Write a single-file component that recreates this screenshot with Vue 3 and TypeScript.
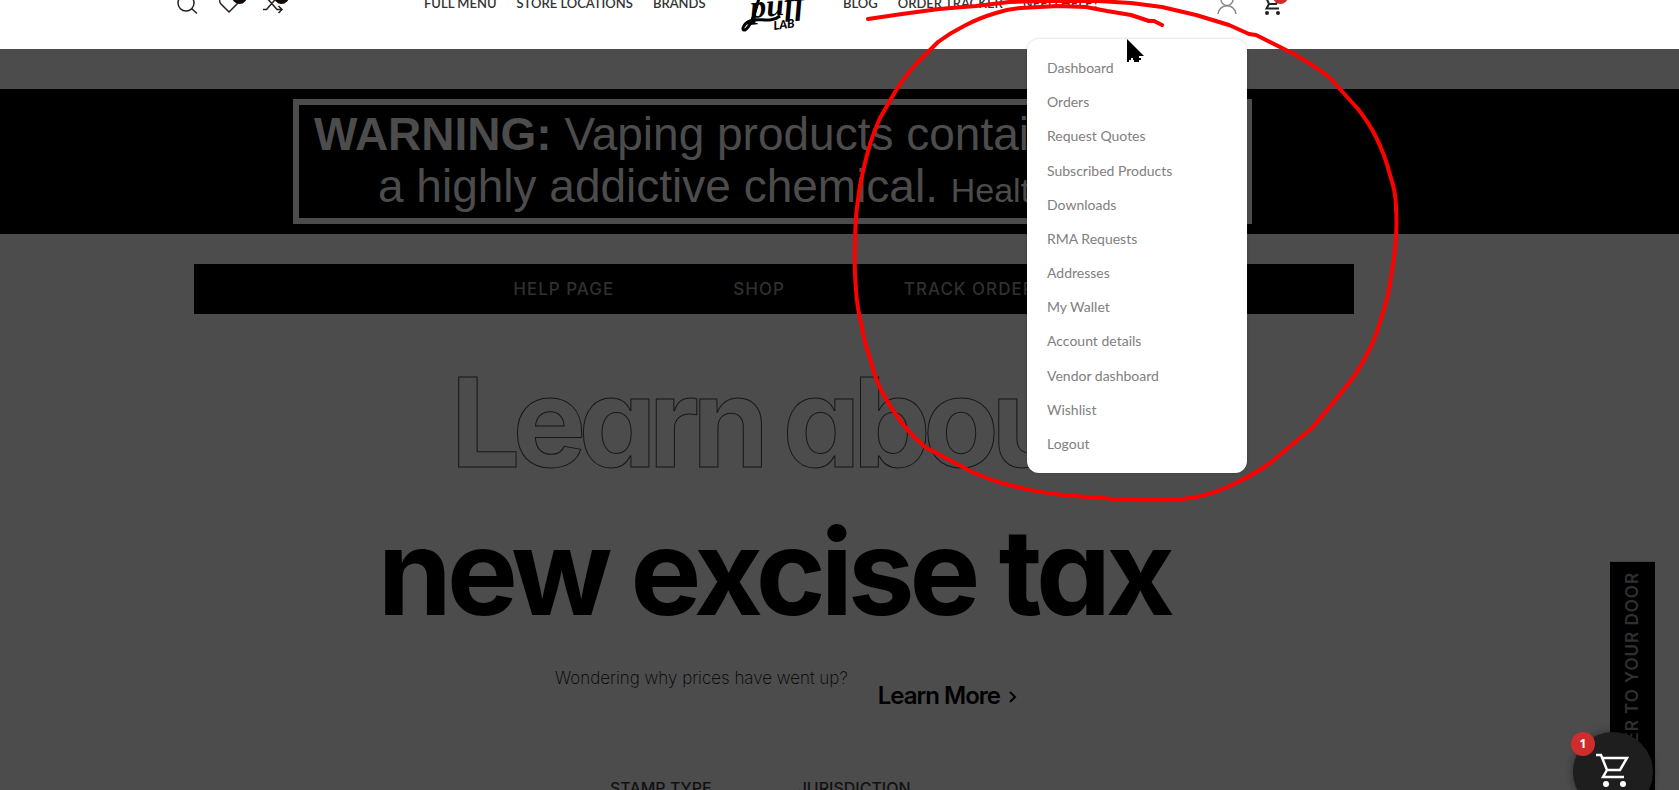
<script setup lang="ts">
const shopLinks: string[] = ['Full Menu', 'Store Locations', 'Brands']
const infoLinks: string[] = ['Blog', 'Order Tracker', 'Need Help?']
const barLinks: string[] = ['Help Page', 'Shop', 'Track Order']
const accountLinks: string[] = [
  'Dashboard',
  'Orders',
  'Request Quotes',
  'Subscribed Products',
  'Downloads',
  'RMA Requests',
  'Addresses',
  'My Wallet',
  'Account details',
  'Vendor dashboard',
  'Wishlist',
  'Logout',
]
</script>

<template>
  <div class="page">
    <header class="header">
      <div class="header-row">
        <div class="tools">
          <button class="tool" aria-label="Search">
            <svg width="22" height="22" viewBox="0 0 22 22"><circle cx="8" cy="11" r="8" /><path d="M13.500 16.500 19 21.500" /></svg>
          </button>
          <button class="tool" aria-label="Wishlist">
            <svg width="22" height="22" viewBox="0 0 22 22"><path d="M9 20 1 12C-3 7 3 0 9 6 15 0 21 7 17 12Z" /></svg>
            <span class="dot"></span>
          </button>
          <button class="tool" aria-label="Compare">
            <svg width="22" height="22" viewBox="0 0 22 22"><path d="M1 17.500H4.500L15 5.500H20M1 5.500H4.500L15 17.500H20M16.500 2 20 5.500 16.500 9M16.500 14 20 17.500 16.500 21" /></svg>
            <span class="dot"></span>
          </button>
        </div>
        <nav class="nav" aria-label="Shop">
          <a v-for="link in shopLinks" :key="link" href="#">{{ link }}</a>
        </nav>
        <a class="logo" href="#" aria-label="Puff Lab">
          <svg width="62" height="58" viewBox="0 0 62 58">
            <text class="logo-script" x="9" y="44" transform="rotate(-5 9 44)">puff</text>
            <path d="M17 24C13 40 8 53 3 56-1 57 1 50 8 47 17 43 28 50 38 42" />
            <text class="logo-lab" x="32" y="56" transform="rotate(-7 32 56)">LAB</text>
          </svg>
        </a>
        <nav class="nav" aria-label="Information">
          <a v-for="link in infoLinks" :key="link" href="#">{{ link }}</a>
        </nav>
        <div class="account">
          <button class="tool user" aria-label="My account">
            <svg width="22" height="22" viewBox="0 0 22 22"><circle cx="10" cy="7.500" r="6" /><path d="M1 22C2 11 18 11 19 22" /></svg>
          </button>
          <button class="tool cart" aria-label="Cart">
            <svg width="22" height="22" viewBox="0 0 22 22"><path d="M1 3H4L8 12H15L19 5H5M8 12 5.500 16.500H18" /><circle class="wheel" cx="6" cy="21" r="2" /><circle class="wheel" cx="17" cy="21" r="2" /></svg>
            <span class="dot red"></span>
          </button>
        </div>
      </div>
    </header>

    <main class="main">
      <section class="warning">
        <div class="warning-frame">
          <p><strong>WARNING:</strong> Vaping products contain nicotine,</p>
          <p class="second">a highly addictive chemical. <small>Health Canada</small></p>
        </div>
      </section>

      <nav class="bar" aria-label="Quick links">
        <a v-for="link in barLinks" :key="link" href="#">{{ link }}</a>
      </nav>

      <section class="hero">
        <h2 class="outline">Learn about</h2>
        <h1 class="title">new excise tax</h1>
        <div class="more">
          <p>Wondering why prices have went up?</p>
          <a href="#">Learn More
            <svg width="8" height="14" viewBox="0 0 8 14"><path d="M1 2 6 7 1 12" /></svg>
          </a>
        </div>
      </section>

      <table class="stamps">
        <thead>
          <tr><th scope="col">STAMP TYPE</th><th scope="col">JURISDICTION</th></tr>
        </thead>
      </table>
    </main>

    <a class="side-tab" href="#">DELIVER TO YOUR DOOR</a>

    <button class="float-cart" aria-label="Open cart, 1 item">
      <svg width="36" height="36" viewBox="0 0 36 36"><path d="M1 2H6L12 17H25L32 5H8M12 17 8 24H29" /><circle cx="11" cy="31" r="3" /><circle cx="28" cy="31" r="3" /></svg>
      <span class="count">1</span>
    </button>

    <ul class="menu">
      <li v-for="link in accountLinks" :key="link"><a href="#">{{ link }}</a></li>
    </ul>

    <svg class="scribble" width="560" height="520" viewBox="850 0 560 520" aria-hidden="true">
      <path d="M868 19 902 14 939 9 976 6 1009 2 1041 1 1098 1 1131 3 1162 7 1196 15 1229 25 1249 34 1256 35 1292 53 Q1312 64 1329 77 L1358 109 Q1369 123 1376 137 1385 155 1390 175 1396 192 1396 208 1397 222 1396 237 1395 255 1392 270 1389 297 1380 322 1375 340 1366 356 1358 372 1345 388 L1313 427 1270 463 Q1250 477 1227 487 1212 494 1196 497 1181 500 1166 500 L1127 500 1062 495 Q1036 492 1013 486 992 481 972 472 L925 447 Q911 435 902 423 890 407 882 392 874 376 870 358 864 342 862 327 857 308 856 290 854 268 855 247 855 225 857 207 859 187 864 167 870 140 880 118 L895 92 Q905 76 917 63 L938 42 Q950 33 964 26 979 18 996 13 1008 9 1021 8 L1058 6 1086 7 1107 11 1131 15 1149 21 1154 21 1162 25" />
    </svg>

    <svg class="pointer" width="18" height="25" viewBox="0 0 18 25" aria-hidden="true">
      <path d="M0 0 17 17H12V19H14V21H12V23H7V21H6V19H4V21H2V23H0Z" />
    </svg>
  </div>
</template>

<style>
body {
  margin: 0;
  background: #4c4c4c;
}
</style>

<style scoped>
.page {
  position: relative;
  height: 100vh;
  overflow: hidden;
  background: #4c4c4c;
  font-family: Lato, "Liberation Sans", sans-serif;
}
a {
  color: inherit;
  text-decoration: none;
}
button {
  border: 0;
  padding: 0;
  background: none;
}
p, h1, h2, ul {
  margin: 0;
}
.header {
  background: #fff;
}
.header-row {
  display: grid;
  grid-template-columns: 246px 318px 101px 374px 1fr;
  align-items: center;
  height: 92px;
  margin-top: -43px;
  padding-left: 178px;
}
.tools, .account {
  display: flex;
}
.tools {
  gap: 20px;
}
.account {
  gap: 22px;
}
.tool {
  position: relative;
  width: 22px;
  height: 22px;
}
.tool svg {
  display: block;
  overflow: visible;
  fill: none;
  stroke: #222;
  stroke-width: 1.5;
}
.user svg {
  stroke: #888;
}
.cart svg {
  stroke-width: 2;
}
.tool .wheel {
  fill: #222;
  stroke: none;
}
.dot {
  position: absolute;
  top: -3px;
  right: -5px;
  width: 15px;
  height: 15px;
  border-radius: 50%;
  background: #120808;
}
.dot.red {
  background: #cf2d2d;
}
.nav {
  display: flex;
  gap: 20px;
  color: #333;
  font-size: 13px;
  font-weight: 600;
  line-height: 20px;
  text-transform: uppercase;
  white-space: nowrap;
}
.logo svg {
  display: block;
  overflow: visible;
}
.logo path {
  fill: none;
  stroke: #000;
  stroke-width: 3;
}
.logo-script {
  font: italic 700 32px "Liberation Serif", serif;
}
.logo-lab {
  font: italic 900 12px Lato, sans-serif;
}
.main {
  padding: 40px 131px 0 0;
}
.warning {
  display: flex;
  justify-content: center;
  margin-right: -131px;
  padding: 10px 134px 10px 0;
  background: #000;
}
.warning-frame {
  box-sizing: border-box;
  width: 959px;
  height: 125px;
  padding: 3px 15px;
  overflow: hidden;
  border: 6px solid #4c4c4c;
  color: #4c4c4c;
  font-family: "Liberation Sans", Arial, sans-serif;
  font-size: 46px;
  line-height: 52px;
  white-space: nowrap;
}
.warning-frame .second {
  padding-left: 64px;
}
.warning-frame small {
  font-size: 34px;
}
.bar {
  display: flex;
  justify-content: center;
  gap: 119px;
  width: 1160px;
  margin: 30px auto 0;
  background: #000;
  color: #303030;
  font: 500 17px/50px Inter, sans-serif;
  letter-spacing: 1px;
  text-transform: uppercase;
}
.hero {
  color: #000;
  font-family: Inter, sans-serif;
  text-align: center;
}
.outline, .title {
  font-feature-settings: "cv11", "ss03";
  line-height: 148px;
  white-space: nowrap;
}
.outline {
  margin-top: 34px;
  color: #4c4c4c;
  font-size: 124px;
  font-weight: 700;
  letter-spacing: -8px;
  -webkit-text-stroke: 1px #161616;
}
.title {
  margin-top: 2px;
  font-size: 119px;
  font-weight: 700;
  letter-spacing: -5px;
}
.more {
  display: flex;
  justify-content: center;
  gap: 30px;
  padding-left: 24px;
  margin-top: 16px;
}
.more p {
  font-size: 17px;
  font-weight: 200;
  line-height: 32px;
}
.more a {
  margin-top: 16px;
  font-size: 24px;
  font-weight: 600;
  letter-spacing: -1px;
  line-height: 36px;
}
.more svg {
  margin-left: 4px;
  fill: none;
  stroke: #000;
  stroke-width: 2;
}
.stamps {
  margin: 62px 0 0 610px;
  border-collapse: collapse;
  color: #111;
  font: 500 16px/24px Inter, sans-serif;
}
.stamps th {
  padding: 0 86px 0 0;
  font-weight: 500;
}
.side-tab {
  position: absolute;
  top: 562px;
  right: 24px;
  width: 45px;
  padding: 10px 0;
  box-sizing: border-box;
  background: #000;
  color: #303030;
  font: 600 17px/45px Inter, sans-serif;
  letter-spacing: 1px;
  text-align: right;
  white-space: nowrap;
  writing-mode: vertical-rl;
  transform: rotate(180deg);
}
.float-cart {
  position: absolute;
  top: 732px;
  right: 26px;
  width: 80px;
  height: 80px;
  border-radius: 50%;
  background: #1e1e1e;
  box-shadow: 0 0 8px rgba(0, 0, 0, 0.4);
}
.float-cart svg {
  fill: none;
  stroke: #fff;
  stroke-width: 2.5;
}
.float-cart circle {
  fill: #fff;
  stroke: none;
}
.count {
  position: absolute;
  top: 0;
  left: -2px;
  width: 24px;
  border-radius: 50%;
  background: #cf2d2d;
  color: #fff;
  font: 700 12px/24px "Open Sans", sans-serif;
}
.menu {
  position: absolute;
  top: 39px;
  left: 1027px;
  display: grid;
  grid-auto-rows: 1fr;
  align-items: center;
  box-sizing: border-box;
  width: 220px;
  min-height: 434px;
  padding: 12px 20px;
  border-radius: 12px;
  background: #fff;
  box-shadow: 0 0 3px rgba(0, 0, 0, 0.2);
  color: #808080;
  font-size: 14px;
  line-height: 20px;
  list-style: none;
}
.scribble {
  position: absolute;
  top: 0;
  left: 850px;
  fill: none;
  stroke: #f00;
  stroke-width: 4;
  stroke-linecap: round;
  stroke-linejoin: round;
  pointer-events: none;
}
.pointer {
  position: absolute;
  top: 39px;
  left: 1127px;
}
</style>
